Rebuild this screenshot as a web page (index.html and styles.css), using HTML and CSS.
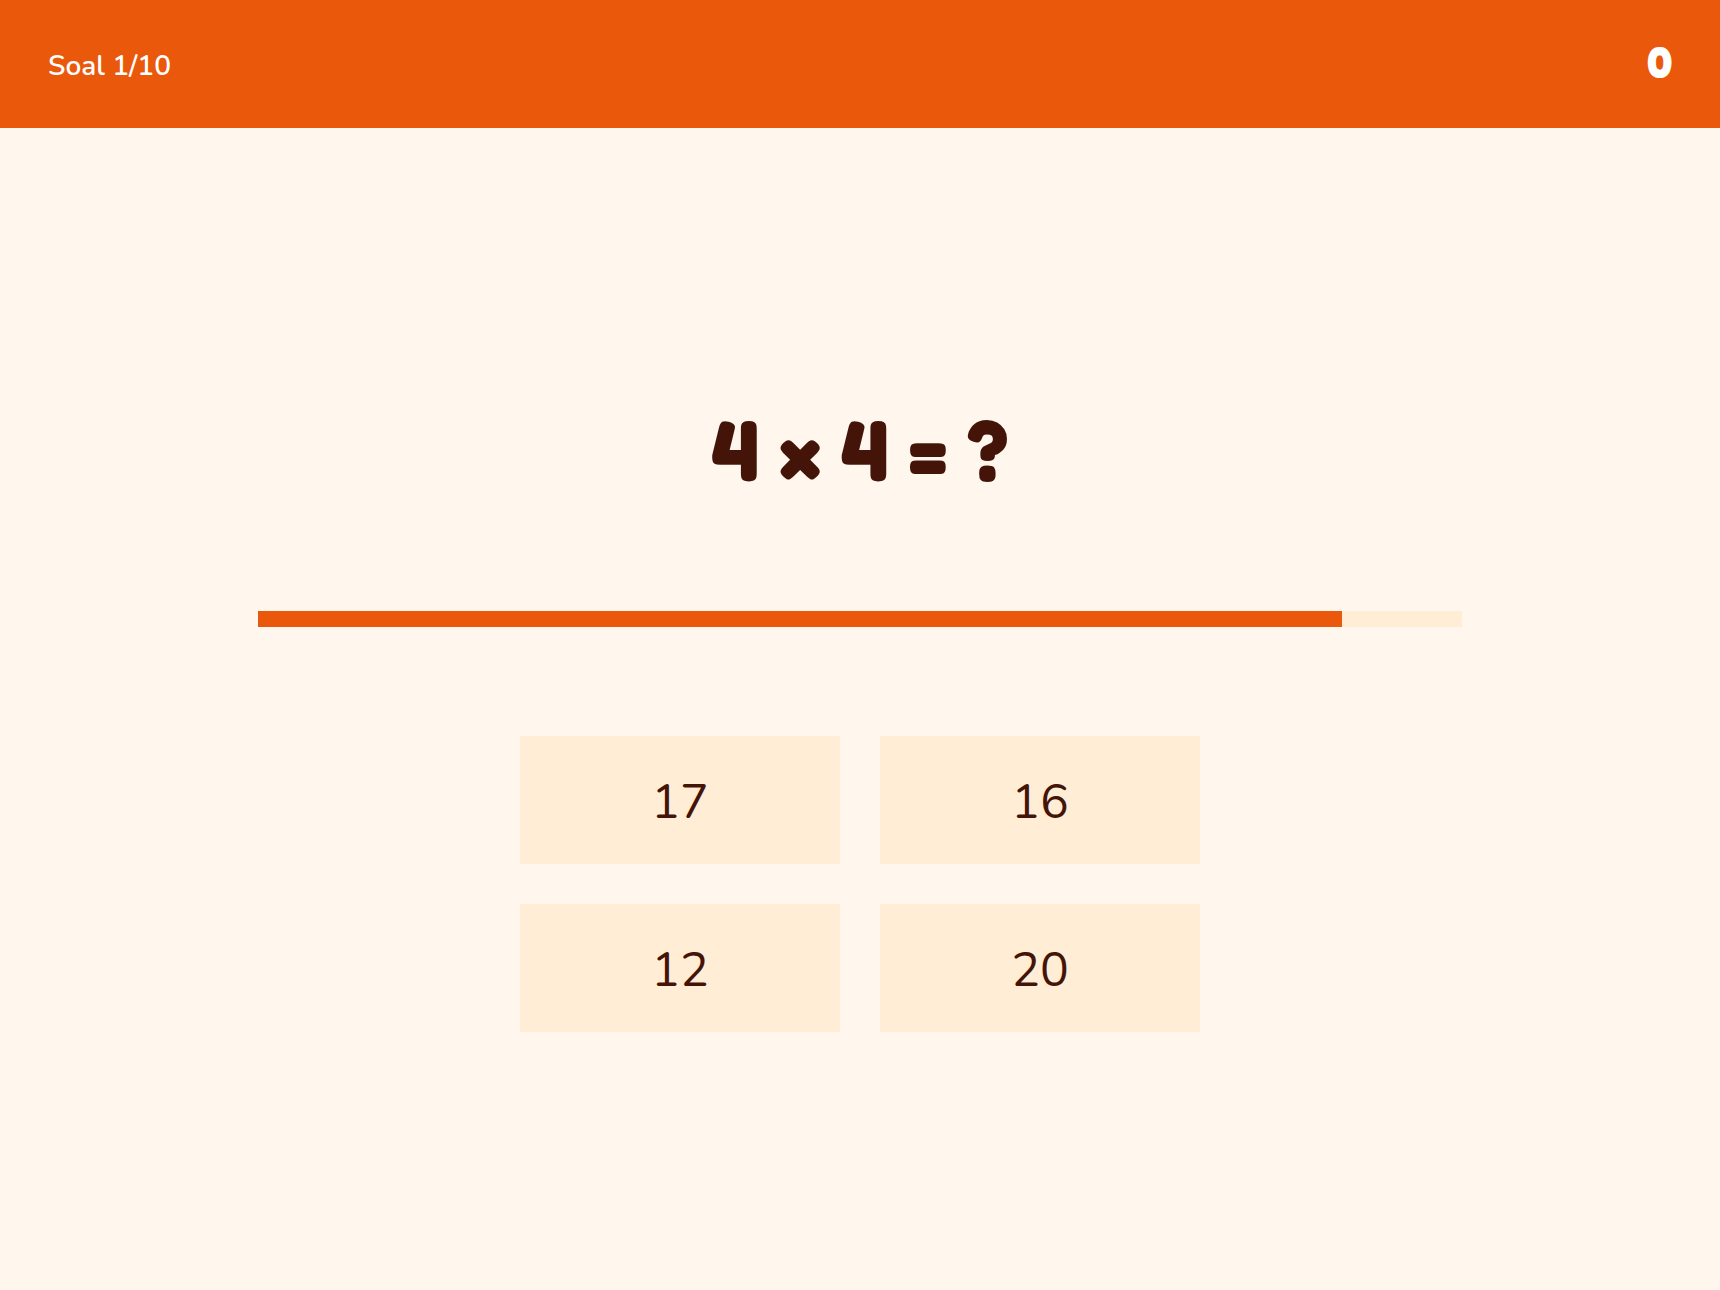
FILE: index.html
```html
<!DOCTYPE html>
<html lang="id">
<head>
    <meta charset="UTF-8">
    <meta name="viewport" content="width=device-width, initial-scale=1.0">
    <title>Kuis Perkalian</title>
    <link rel="stylesheet" href="styles.css">
</head>
<body>

<header class="topbar">
    <span class="question-count">Soal 1/10</span>
    <span class="score">0</span>
</header>

<main class="quiz">
    <h1 class="question">4 × 4 = ?</h1>

    <div class="timer">
        <div class="timer-fill" style="width: 90%"></div>
    </div>

    <div class="answers">
        <button type="button" class="answer">17</button>
        <button type="button" class="answer">16</button>
        <button type="button" class="answer">12</button>
        <button type="button" class="answer">20</button>
    </div>
</main>

</body>
</html>
```
FILE: styles.css
```css
* {
  box-sizing: border-box;
}

body {
  display: flex;
  flex-direction: column;
  min-height: 100vh;
  margin: 0;
  background-color: #fff7ed;
  color: #431407;
  font-family: "Nunito", "Open Sans", sans-serif;
}

.topbar {
  display: flex;
  justify-content: space-between;
  align-items: center;
  padding: 32px 48px;
  background-color: #ea580c;
  color: #fff;
}

.question-count {
  padding-top: 4px;
  font-size: 28px;
  line-height: 60px;
  font-weight: 600;
}

.score {
  padding-bottom: 4px;
  font-family: "Fredoka One", "Fredoka", "Lato", sans-serif;
  font-size: 44px;
  line-height: 60px;
  font-weight: 700;
}

.quiz {
  flex: 1;
  display: flex;
  flex-direction: column;
  justify-content: center;
  align-items: center;
  gap: 109px;
  padding: 64px 48px 48px;
}

.question {
  margin: 0;
  padding-bottom: 6px;
  font-family: "Fredoka One", "Fredoka", "Lato", sans-serif;
  font-size: 86px;
  line-height: 94px;
  font-weight: 700;
}

.timer {
  width: 70vw;
  height: 16px;
  background-color: #ffedd5;
}

.timer-fill {
  height: 100%;
  background-color: #ea580c;
}

.answers {
  display: grid;
  grid-template-columns: 320px 320px;
  gap: 40px;
}

.answer {
  height: 128px;
  padding: 4px 0 0;
  border: none;
  background-color: #ffedd5;
  color: #431407;
  font-family: inherit;
  font-size: 48px;
  cursor: pointer;
}

.answer:hover {
  background-color: #fed7aa;
}
```
